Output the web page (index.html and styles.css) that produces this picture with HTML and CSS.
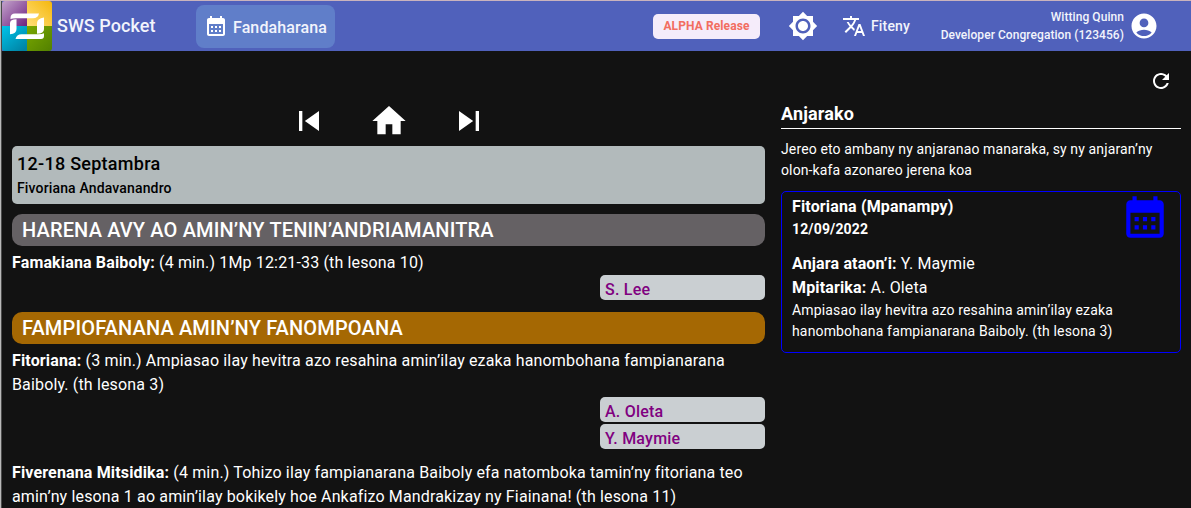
FILE: index.html
```html
<!DOCTYPE html>
<html lang="mg">
<head>
<meta charset="utf-8">
<title>SWS Pocket</title>
<link rel="stylesheet" href="styles.css">
</head>
<body>
<div class="app">
  <header class="bar">
    <svg class="logo" viewBox="0 0 50 50">
      <defs>
        <linearGradient id="p" x1="0" y1="0" x2="1" y2="1"><stop offset="0" stop-color="#c3a3cb"/><stop offset="1" stop-color="#6d2180"/></linearGradient>
        <linearGradient id="y" x1="0" y1="1" x2="1" y2="0"><stop offset="0" stop-color="#ffdf7a"/><stop offset="1" stop-color="#f5b70c"/></linearGradient>
        <linearGradient id="b" x1="0" y1="0" x2=".8" y2="1"><stop offset="0" stop-color="#00c4ea"/><stop offset="1" stop-color="#0084a5"/></linearGradient>
        <linearGradient id="g" x1="0" y1="0" x2="1" y2="1"><stop offset="0" stop-color="#7aa800"/><stop offset="1" stop-color="#528000"/></linearGradient>
        <clipPath id="c"><rect width="50" height="50" rx="3"/></clipPath>
      </defs>
      <g clip-path="url(#c)">
        <path fill="url(#p)" d="M0 0h25v25H0z"/><path fill="url(#y)" d="M25 0h25v25H25z"/>
        <path fill="url(#b)" d="M0 25h25v25H0z"/><path fill="url(#g)" d="M25 25h25v25H25z"/>
      </g>
      <g fill="#fff">
        <path d="M8.500 17Q8.500 12.500 13 12.500H37Q36 17.300 31 17.300H14Q10.500 17.300 8.500 18z"/>
        <path d="M42 16.500V28Q42 32.500 35 32.800V22Q35 17.500 42 16.500z"/>
        <path d="M8 33.300V22Q8 18.500 14.500 18.300V28Q14.500 33 8 33.300z"/>
        <path d="M13.500 38Q14.500 33.300 19.500 33.300H36Q40 33.300 42 32.300V35Q42 38 39 38z"/>
      </g>
    </svg>
    <span class="brand">SWS Pocket</span>
    <div class="tab">
      <svg class="i24" viewBox="0 0 24 24"><path d="M19 4h-1V2h-2v2H8V2H6v2H5c-1.110 0-1.990.9-1.990 2L3 20c0 1.100.89 2 2 2h14c1.100 0 2-.9 2-2V6c0-1.100-.9-2-2-2zm0 16H5V10h14v10zM9 14H7v-2h2v2zm4 0h-2v-2h2v2zm4 0h-2v-2h2v2zm-8 4H7v-2h2v2zm4 0h-2v-2h2v2zm4 0h-2v-2h2v2z"/></svg>
      <span>Fandaharana</span>
    </div>
    <span class="alpha">ALPHA Release</span>
    <svg class="sun" viewBox="0 0 24 24"><path d="M20 8.690V4h-4.690L12 .69 8.690 4H4v4.690L.69 12 4 15.310V20h4.690L12 23.310 15.310 20H20v-4.690L23.310 12 20 8.690zM12 18c-3.310 0-6-2.690-6-6s2.690-6 6-6 6 2.690 6 6-2.690 6-6 6zm0-10c-2.210 0-4 1.790-4 4s1.790 4 4 4 4-1.790 4-4-1.790-4-4-4z"/></svg>
    <div class="lang">
      <svg class="i24" viewBox="0 0 24 24"><path d="m12.870 15.070-2.540-2.510.03-.03c1.740-1.940 2.980-4.170 3.710-6.530H17V4h-7V2H8v2H1v1.990h11.170C11.500 7.920 10.440 9.750 9 11.350 8.070 10.320 7.300 9.190 6.690 8h-2c.73 1.630 1.730 3.170 2.980 4.560l-5.090 5.020L4 19l5-5 3.110 3.110.76-2.040zM18.500 10h-2L12 22h2l1.120-3h4.750L21 22h2l-4.500-12zm-2.620 7 1.620-4.330L19.120 17h-3.240z"/></svg>
      <span>Fiteny</span>
    </div>
    <div class="user">
      <div class="names"><span>Witting Quinn</span><span>Developer Congregation (123456)</span></div>
      <svg class="avatar" viewBox="0 0 24 24"><path d="M12 2C6.480 2 2 6.480 2 12s4.480 10 10 10 10-4.480 10-10S17.520 2 12 2zm0 4c1.930 0 3.500 1.570 3.500 3.500S13.930 13 12 13s-3.500-1.570-3.500-3.500S10.070 6 12 6zm0 14c-2.030 0-4.430-.82-6.140-2.880C7.550 15.800 9.680 15 12 15s4.450.8 6.140 2.120C16.430 19.180 14.030 20 12 20z"/></svg>
    </div>
  </header>
  <main class="content">
    <section class="schedule">
      <nav class="pager">
        <svg viewBox="0 0 24 24"><path d="M6 6h2v12H6zm3.500 6 8.500 6V6z"/></svg>
        <svg viewBox="0 0 24 24"><path d="M10 20v-6h4v6h5v-8h3L12 3 2 12h3v8z"/></svg>
        <svg viewBox="0 0 24 24"><path d="m6 18 8.500-6L6 6v12zM16 6v12h2V6h-2z"/></svg>
      </nav>
      <div class="week"><div class="dates">12-18 Septambra</div><div class="kind">Fivoriana Andavanandro</div></div>
      <h2 class="part treasures">HARENA AVY AO AMIN’NY TENIN’ANDRIAMANITRA</h2>
      <p class="item"><b>Famakiana Baiboly:</b> (4 min.) 1Mp 12:21-33 (th lesona 10)</p>
      <div class="people"><span>S. Lee</span></div>
      <h2 class="part ministry">FAMPIOFANANA AMIN’NY FANOMPOANA</h2>
      <p class="item"><b>Fitoriana:</b> (3 min.) Ampiasao ilay hevitra azo resahina amin’ilay ezaka hanombohana fampianarana Baiboly. (th lesona 3)</p>
      <div class="people"><span>A. Oleta</span><span>Y. Maymie</span></div>
      <p class="item last"><b>Fiverenana Mitsidika:</b> (4 min.) Tohizo ilay fampianarana Baiboly efa natomboka tamin’ny fitoriana teo amin’ny lesona 1 ao amin’ilay bokikely hoe Ankafizo Mandrakizay ny Fiainana! (th lesona 11)</p>
    </section>
    <aside class="mine">
      <svg class="refresh" viewBox="0 0 24 24"><path d="M17.650 6.350C16.200 4.900 14.210 4 12 4c-4.420 0-7.990 3.580-7.990 8s3.570 8 7.990 8c3.730 0 6.840-2.550 7.730-6h-2.080c-.82 2.330-3.040 4-5.650 4-3.310 0-6-2.690-6-6s2.690-6 6-6c1.660 0 3.140.69 4.220 1.780L13 11h7V4l-2.350 2.350z"/></svg>
      <h3 class="heading">Anjarako</h3>
      <p class="hint">Jereo eto ambany ny anjaranao manaraka, sy ny anjaran’ny olon-kafa azonareo jerena koa</p>
      <article class="card">
        <div class="top">
          <div><div class="role">Fitoriana (Mpanampy)</div><div class="date">12/09/2022</div></div>
          <svg class="cal" viewBox="0 0 24 24"><path d="M19 4h-1V2h-2v2H8V2H6v2H5c-1.110 0-1.990.9-1.990 2L3 20c0 1.100.89 2 2 2h14c1.100 0 2-.9 2-2V6c0-1.100-.9-2-2-2zm0 16H5V10h14v10zM9 14H7v-2h2v2zm4 0h-2v-2h2v2zm4 0h-2v-2h2v2zm-8 4H7v-2h2v2zm4 0h-2v-2h2v2zm4 0h-2v-2h2v2z"/></svg>
        </div>
        <div class="line"><b>Anjara ataon’i:</b> Y. Maymie</div>
        <div class="line"><b>Mpitarika:</b> A. Oleta</div>
        <p class="desc">Ampiasao ilay hevitra azo resahina amin’ilay ezaka hanombohana fampianarana Baiboly. (th lesona 3)</p>
      </article>
    </aside>
  </main>
</div>
</body>
</html>
```
FILE: styles.css
```css
* { box-sizing: border-box; }
body { margin: 0; background: #121212; color: #fff; font: 400 16px/24px Roboto, sans-serif; letter-spacing: .15px; overflow: hidden; }
h2, h3, p { margin: 0; }
b { font-weight: 700; }
svg { display: block; flex: none; fill: currentColor; }
.app { height: 508px; overflow: hidden; border-top: 1px solid #c9b3bd; border-left: 1px solid #b9b9b9; box-shadow: inset 1px 0 #4a4a4a; }
.bar { display: flex; align-items: center; height: 50px; margin-left: 1px; background: #5061bb; color: #f2f4fc; white-space: nowrap; }
.logo { width: 50px; height: 50px; }
.brand { width: 139px; margin-left: 5px; font-size: 18px; font-weight: 500; letter-spacing: .06px; }
.tab { display: flex; align-items: center; gap: 5px; width: 139px; height: 43px; padding: 2px 0 0 8px; border-radius: 8px; background: #607ec9; font-weight: 500; letter-spacing: .1px; }
.i24 { width: 24px; height: 24px; color: #fff; }
.tab .i24 { margin-top: -2px; }
.tab span { padding-top: 1px; }
.alpha { width: 107px; height: 25px; margin-left: 318px; border-radius: 5px; background: #f5ecfa; color: #f26d60; font-size: 12px; font-weight: 700; line-height: 25px; letter-spacing: .1px; text-align: center; }
.sun { width: 30px; height: 30px; margin-left: 28px; color: #fff; }
.lang { display: flex; align-items: center; gap: 5px; margin-left: 24px; font-size: 14px; font-weight: 500; }
.user { display: flex; align-items: center; gap: 5px; margin: 0 32px 0 auto; }
.names { display: flex; flex-direction: column; align-items: flex-end; font-size: 12px; font-weight: 500; line-height: 18px; letter-spacing: .06px; }
.avatar { width: 30px; height: 30px; color: #fff; }
.content { display: grid; grid-template-columns: 753px 400px; gap: 16px; padding-left: 11px; }
.pager { display: flex; justify-content: center; gap: 40px; padding: 50px 0 5px; }
.pager svg { width: 40px; height: 40px; }
.week { height: 58px; padding: 6px 5px 0; border-radius: 5px; background: #b2babb; color: #000; font-weight: 500; }
.dates { font-size: 18px; line-height: 24px; letter-spacing: .27px; }
.kind { font-size: 14px; line-height: 24px; }
.part { height: 32px; margin: 10px 0 5px; padding-left: 10px; border-radius: 10px; font-size: 20px; font-weight: 500; line-height: 32px; }
.treasures { background: #656164; }
.ministry { margin-top: 12px; background: #a56803; }
.people { display: flex; flex-direction: column; align-items: flex-end; gap: 2px; }
.people span { width: 165px; height: 25px; padding: 3px 5px 0; border-radius: 5px; background: #cacfd2; color: #800080; font-weight: 500; line-height: 24px; letter-spacing: .22px; }
.last { margin-top: 12px; }
.refresh { width: 24px; height: 24px; margin: 18px 8px 0 auto; }
.heading { height: 36px; border-bottom: 1px solid #fff; font-size: 18px; font-weight: 700; line-height: 41px; }
.hint { margin-top: 10px; font-size: 14px; line-height: 21px; letter-spacing: .13px; }
.card { height: 162px; margin-top: 10px; padding: 0 10px; border: 1px solid #00f; border-radius: 5px; }
.top { display: flex; justify-content: space-between; height: 60px; }
.role { padding-top: 3px; font-weight: 700; }
.date { font-size: 14px; font-weight: 700; line-height: 21px; }
.cal { width: 50px; height: 50px; color: #00f; }
.desc { font-size: 14px; line-height: 21px; }
```
